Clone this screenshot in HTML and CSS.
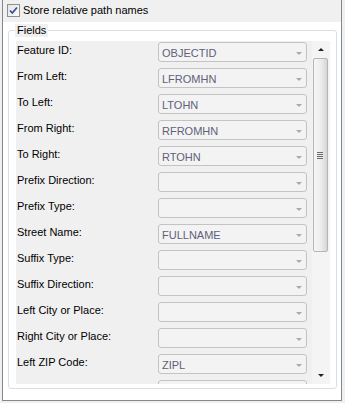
FILE: index.html
```html
<!DOCTYPE html>
<html lang="en">
<head>
  <meta charset="UTF-8">
  <title>Fields</title>
  <link rel="stylesheet" href="styles.css">
</head>
<body>
  <div class="frame">
    <div class="top-bar">
      <label class="check">
        <span class="box">
          <svg width="11" height="11" viewBox="0 0 11 11"><path d="M2 5.5 L4.3 8 L9 2.5" fill="none" stroke="#3b4f9c" stroke-width="1.8"/></svg>
        </span>
        Store relative path names
      </label>
    </div>

    <div class="panel">
      <div class="group">
        <span class="legend">Fields</span>

        <div class="scroll-area">
          <div class="list" id="list"></div>

          <div class="scrollbar">
            <div class="sb-btn"><span class="arrow-up"></span></div>
            <div class="thumb">
              <span class="grip"></span>
            </div>
            <div class="sb-track"></div>
            <div class="sb-btn"><span class="arrow-down"></span></div>
          </div>
        </div>
      </div>
    </div>
  </div>

  <script>
    const fields = [
      ["Feature ID:", "OBJECTID"],
      ["From Left:", "LFROMHN"],
      ["To Left:", "LTOHN"],
      ["From Right:", "RFROMHN"],
      ["To Right:", "RTOHN"],
      ["Prefix Direction:", ""],
      ["Prefix Type:", ""],
      ["Street Name:", "FULLNAME"],
      ["Suffix Type:", ""],
      ["Suffix Direction:", ""],
      ["Left City or Place:", ""],
      ["Right City or Place:", ""],
      ["Left ZIP Code:", "ZIPL"],
      ["Right ZIP Code:", ""]
    ];

    const list = document.getElementById("list");
    fields.forEach(([label, value]) => {
      const row = document.createElement("div");
      row.className = "row";
      row.innerHTML = `<span class="label">${label}</span>
        <div class="combo"><span class="value">${value}</span><span class="caret"></span></div>`;
      list.appendChild(row);
    });
  </script>
</body>
</html>
```

FILE: styles.css
```css
body {
  margin: 0;
  background: #f0f0f0;
  font-family: "Liberation Sans", Arial, sans-serif;
  font-size: 11px;
  color: #000;
}

.frame {
  margin-left: 2px;
  width: 338px;
  height: 400px;
  border: 1px solid #828790;
  border-top: none;
  background: #fff;
}

.top-bar {
  height: 22px;
  background: #f0f0f0;
}

.check {
  display: flex;
  align-items: center;
  gap: 3px;
  padding: 4px 0 0 4px;
  line-height: 13px;
}

.box {
  width: 11px;
  height: 11px;
  border: 1px solid #8e8f8f;
  background: linear-gradient(135deg, #e4e4e4, #fbfbfb);
  display: flex;
}

.panel {
  padding: 8px 4px 0 5px;
}

.group {
  position: relative;
  height: 359px;
  border: 1px solid #d5dfe5;
  border-radius: 3px;
  padding: 10px 5px 0 7px;
  box-sizing: border-box;
}

.legend {
  position: absolute;
  top: -7px;
  left: 6px;
  padding: 0 2px;
  background: #f0f0f0;
  line-height: 13px;
}

.scroll-area {
  display: flex;
  height: 343px;
}

.list {
  width: 296px;
  background: #f0f0f0;
  overflow: hidden;
  padding-top: 1px;
  box-sizing: border-box;
}

.row {
  display: grid;
  grid-template-columns: 142px 149px;
  height: 26px;
}

.label {
  padding: 1px 0 0 1px;
  line-height: 14px;
}

.combo {
  height: 20px;
  box-sizing: border-box;
  border: 1px solid #c3c3c3;
  border-radius: 3px;
  background: #f3f3f3;
  display: flex;
  align-items: center;
  justify-content: space-between;
  padding: 0 4px 0 3px;
}

.value {
  color: #5f6079;
  line-height: 18px;
  padding-top: 1px;
}

.caret {
  width: 0;
  height: 0;
  border-left: 3px solid transparent;
  border-right: 3px solid transparent;
  border-top: 3px solid #a9a9a9;
  margin-top: 2px;
}

.scrollbar {
  width: 18px;
  display: flex;
  flex-direction: column;
  background: #f4f4f4;
}

.sb-btn {
  height: 17px;
  display: flex;
  align-items: center;
  justify-content: center;
}

.arrow-up {
  border-left: 3px solid transparent;
  border-right: 3px solid transparent;
  border-bottom: 3px solid #222;
}

.arrow-down {
  border-left: 3px solid transparent;
  border-right: 3px solid transparent;
  border-top: 3px solid #222;
}

.thumb {
  height: 194px;
  margin: 0 2px 0 1px;
  border: 1px solid #b5b5b5;
  border-radius: 2px;
  box-sizing: border-box;
  background: linear-gradient(90deg, #f6f6f6 0%, #ececec 55%, #d6d6d6 100%);
  display: flex;
  align-items: center;
  justify-content: center;
}

.grip {
  width: 6px;
  height: 7px;
  background: repeating-linear-gradient(180deg, #6e6e6e 0 1px, #e8e8e8 1px 2px);
  margin-right: 1px;
}

.sb-track {
  flex: 1;
}
```
